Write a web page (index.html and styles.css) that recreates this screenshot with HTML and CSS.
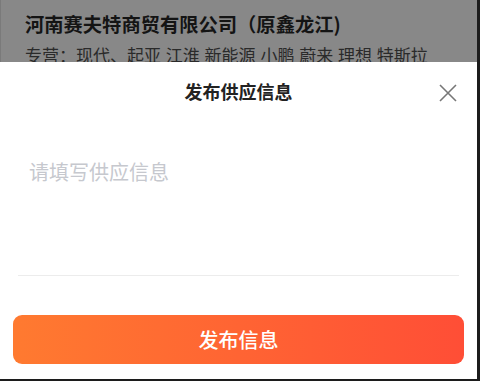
FILE: index.html
```html
<!DOCTYPE html>
<html lang="zh-CN">

<head>
    <meta charset="UTF-8">
    <meta name="viewport" content="width=device-width, initial-scale=1.0">
    <title>发布供应信息</title>
    <link rel="stylesheet" href="styles.css">
</head>

<body>
    <div class="frame">
        <!-- 被遮罩的店铺信息 -->
        <div class="shop">
            <div class="shop-name">河南赛夫特商贸有限公司（原鑫龙江)</div>
            <div class="shop-tags">专营：现代、起亚 江淮 新能源 小鹏 蔚来 理想 特斯拉</div>
        </div>

        <div class="sheet">
            <div class="sheet-header">
                <span></span>
                <div class="sheet-title">发布供应信息</div>
                <button class="close" aria-label="关闭">
                    <svg width="18" height="18" viewBox="0 0 18 18">
                        <path d="M1 1 L17 17 M17 1 L1 17" stroke="#777" stroke-width="1.6" fill="none" />
                    </svg>
                </button>
            </div>
            <textarea class="supply-input" placeholder="请填写供应信息"></textarea>
            <button class="submit">发布信息</button>
        </div>
    </div>
</body>

</html>
```

FILE: styles.css
```css
body {
    margin: 0;
    width: 480px;
    height: 381px;
    overflow: hidden;
    font-family: "Noto Sans CJK SC", "Noto Sans", sans-serif;
    background-color: #1c1c1c;
}

.frame {
    width: 477px;
    height: 379px;
    border-right: 3px solid #1c1c1c;
    border-bottom: 2px solid #1c1c1c;
    background-color: #fff;
    display: flex;
    flex-direction: column;
    overflow: hidden;
}

.shop {
    height: 62px;
    box-sizing: border-box;
    padding: 9px 0 0 24px;
    background-color: #888;
    border-left: 1px solid #7a7a7a;
    overflow: hidden;
}

.shop-name {
    font-size: 19.3px;
    font-weight: bold;
    line-height: 30px;
    color: #141414;
    white-space: nowrap;
}

.shop-tags {
    margin-top: 4px;
    font-size: 17px;
    line-height: 24px;
    word-spacing: 1px;
    color: #2a2a2a;
    white-space: nowrap;
}

.sheet {
    flex: 1;
    display: flex;
    flex-direction: column;
}

.sheet-header {
    height: 56px;
    display: grid;
    grid-template-columns: 1fr auto 1fr;
    align-items: center;
}

.sheet-title {
    font-size: 18px;
    font-weight: bold;
    color: #222;
    margin-top: 1px;
}

.close {
    justify-self: end;
    margin-right: 20px;
    margin-top: 6px;
    width: 18px;
    height: 18px;
    padding: 0;
    border: none;
    background: none;
    display: flex;
}

.supply-input {
    margin: 0 18px;
    height: 158px;
    box-sizing: border-box;
    padding: 40px 11px 0;
    border: none;
    border-bottom: 1px solid #ececec;
    resize: none;
    outline: none;
    font-family: inherit;
    font-size: 20px;
    line-height: 28px;
    color: #333;
}

.supply-input::placeholder {
    color: #c6c8ce;
}

.submit {
    margin: 39px 13px 0;
    height: 49px;
    border: none;
    border-radius: 9px;
    background: linear-gradient(90deg, #ff7a30, #ff4e36);
    color: #fff;
    font-family: inherit;
    font-size: 20px;
    font-weight: 500;
}
```
